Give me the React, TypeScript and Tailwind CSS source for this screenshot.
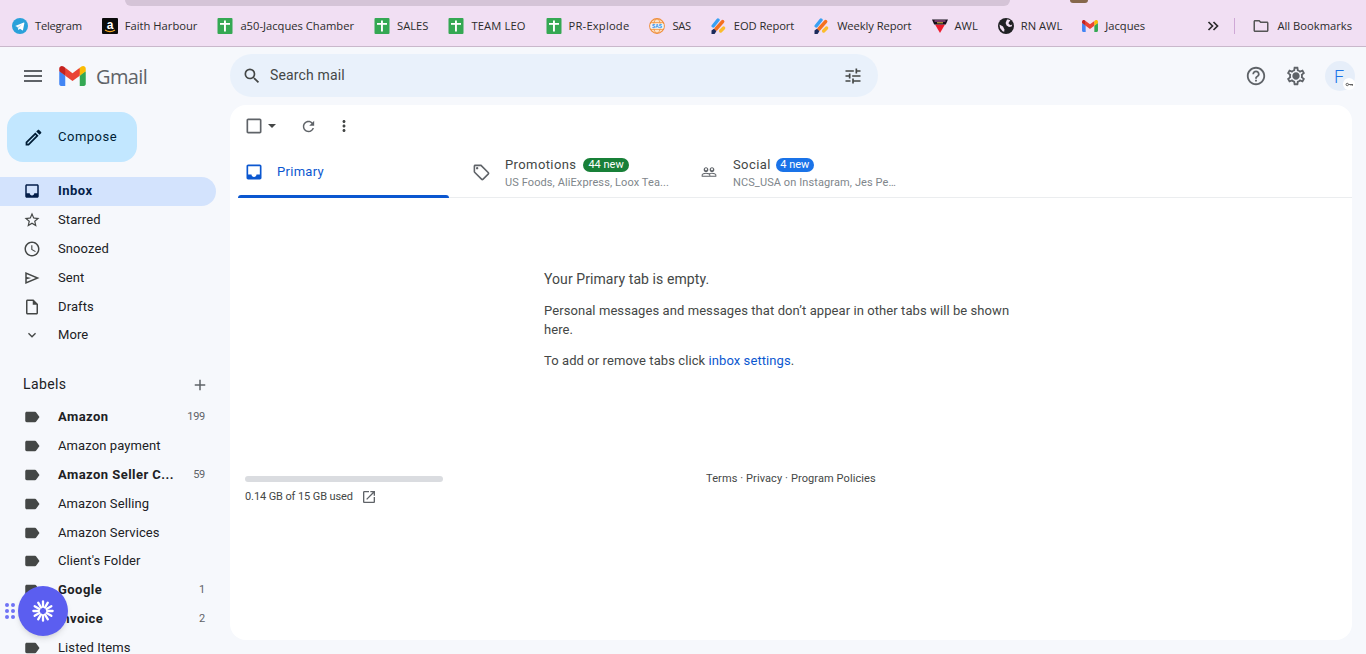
import React from "react";

const P = {
  menu: "M3 18h18v-2H3v2zm0-5h18v-2H3v2zm0-7v2h18V6H3z",
  search: "M15.5 14h-.79l-.28-.27A6.471 6.471 0 0 0 16 9.5 6.5 6.5 0 1 0 9.5 16c1.61 0 3.09-.59 4.23-1.57l.27.28v.79l5 4.99L20.49 19l-4.99-5zm-6 0C7.01 14 5 11.99 5 9.5S7.01 5 9.5 5 14 7.01 14 9.5 11.99 14 9.5 14z",
  tune: "M3 17v2h6v-2H3zM3 5v2h10V5H3zm10 16v-2h8v-2h-8v-2h-2v6h2zM7 9v2H3v2h4v2h2V9H7zm14 4v-2H11v2h10zm-6-4h2V7h4V5h-4V3h-2v6z",
  help: "M11 18h2v-2h-2v2zm1-16C6.48 2 2 6.48 2 12s4.48 10 10 10 10-4.48 10-10S17.52 2 12 2zm0 18c-4.41 0-8-3.59-8-8s3.59-8 8-8 8 3.59 8 8-3.59 8-8 8zm0-14c-2.21 0-4 1.79-4 4h2c0-1.1.9-2 2-2s2 .9 2 2c0 2-3 1.75-3 5h2c0-2.25 3-2.5 3-5 0-2.21-1.79-4-4-4z",
  gear: "M19.43 12.98c.04-.32.07-.64.07-.98 0-.34-.03-.66-.07-.98l2.11-1.65c.19-.15.24-.42.12-.64l-2-3.46c-.09-.16-.26-.25-.44-.25-.06 0-.12.01-.17.03l-2.49 1c-.52-.4-1.08-.73-1.69-.98l-.38-2.65C14.46 2.18 14.25 2 14 2h-4c-.25 0-.46.18-.49.42l-.38 2.65c-.61.25-1.17.59-1.69.98l-2.49-1c-.06-.02-.12-.03-.18-.03-.17 0-.34.09-.43.25l-2 3.46c-.13.22-.07.49.12.64l2.11 1.65c-.04.32-.07.65-.07.98 0 .33.03.66.07.98l-2.11 1.65c-.19.15-.24.42-.12.64l2 3.46c.09.16.26.25.44.25.06 0 .12-.01.17-.03l2.49-1c.52.4 1.08.73 1.69.98l.38 2.65c.03.24.24.42.49.42h4c.25 0 .46-.18.49-.42l.38-2.65c.61-.25 1.17-.59 1.69-.98l2.49 1c.06.02.12.03.18.03.17 0 .34-.09.43-.25l2-3.46c.12-.22.07-.49-.12-.64l-2.11-1.65zM17.45 11.27c.04.31.05.52.05.73 0 .21-.02.43-.05.73l-.14 1.13.89.7 1.08.84-.7 1.21-1.27-.51-1.04-.42-.9.68c-.43.32-.84.56-1.25.73l-1.06.43-.16 1.13-.2 1.35h-1.4l-.19-1.35-.16-1.13-1.06-.43c-.43-.18-.83-.41-1.23-.71l-.91-.7-1.06.43-1.27.51-.7-1.21 1.08-.84.89-.7-.14-1.13c-.03-.31-.05-.54-.05-.74s.02-.43.05-.73l.14-1.13-.89-.7-1.08-.84.7-1.21 1.27.51 1.04.42.9-.68c.43-.32.84-.56 1.25-.73l1.06-.43.16-1.13.2-1.35h1.39l.19 1.35.16 1.13 1.06.43c.43.18.83.41 1.23.71l.91.7 1.06-.43 1.27-.51.7 1.21-1.07.85-.89.7.14 1.13zM12 8c-2.21 0-4 1.79-4 4s1.79 4 4 4 4-1.79 4-4-1.79-4-4-4z",
  edit: "M3 17.25V21h3.75L17.81 9.94l-3.75-3.75L3 17.25zM5.92 19H5v-.92l9.06-9.06.92.92L5.92 19zM20.71 7.04c.39-.39.39-1.02 0-1.41l-2.34-2.34c-.2-.2-.45-.29-.71-.29s-.51.1-.7.29l-1.83 1.83 3.75 3.75 1.83-1.83z",
  inbox: "M19 3H4.99c-1.11 0-1.98.89-1.98 2L3 19c0 1.1.88 2 1.99 2H19c1.1 0 2-.9 2-2V5c0-1.11-.9-2-2-2zm0 12h-4c0 1.66-1.35 3-3 3s-3-1.34-3-3H4.99V5H19v10z",
  star: "M22 9.24l-7.19-.62L12 2 9.19 8.63 2 9.24l5.46 4.73L5.82 21 12 17.27 18.18 21l-1.63-7.03L22 9.24zM12 15.4l-3.76 2.27 1-4.28-3.32-2.88 4.38-.38L12 6.1l1.71 4.04 4.38.38-3.32 2.88 1 4.28L12 15.4z",
  clock: "M11.99 2C6.47 2 2 6.48 2 12s4.47 10 9.99 10C17.52 22 22 17.52 22 12S17.52 2 11.99 2zM12 20c-4.42 0-8-3.58-8-8s3.58-8 8-8 8 3.58 8 8-3.58 8-8 8zm.5-13H11v6l5.25 3.15.75-1.23-4.5-2.67z",
  send: "M3 20V4l19 8zm2-3 11.85-5L5 7v3.5l6 1.5-6 1.5z",
  draft: "M14 2H6c-1.1 0-1.99.9-1.99 2L4 20c0 1.1.89 2 1.99 2H18c1.1 0 2-.9 2-2V8l-6-6zM6 20V4h7v5h5v11H6z",
  more: "M16.59 8.59L12 13.17 7.41 8.59 6 10l6 6 6-6z",
  label: "M17.63 5.84C17.27 5.33 16.67 5 16 5L5 5.01C3.9 5.01 3 5.9 3 7v10c0 1.1.9 1.99 2 1.99L16 19c.67 0 1.27-.33 1.63-.84L22 12l-4.37-6.16z",
  refresh: "M17.65 6.35C16.2 4.9 14.21 4 12 4c-4.42 0-7.99 3.58-7.99 8s3.57 8 7.99 8c3.73 0 6.84-2.55 7.73-6h-2.08c-.82 2.33-3.04 4-5.65 4-3.31 0-6-2.69-6-6s2.69-6 6-6c1.66 0 3.14.69 4.22 1.78L13 11h7V4l-2.35 2.35z",
  vert: "M12 8c1.1 0 2-.9 2-2s-.9-2-2-2-2 .9-2 2 .9 2 2 2zm0 2c-1.1 0-2 .9-2 2s.9 2 2 2 2-.9 2-2-.9-2-2-2zm0 6c-1.1 0-2 .9-2 2s.9 2 2 2 2-.9 2-2-.9-2-2-2z",
  tag: "M21.41 11.58l-9-9C12.05 2.22 11.55 2 11 2H4c-1.1 0-2 .9-2 2v7c0 .55.22 1.05.59 1.42l9 9c.36.36.86.58 1.41.58.55 0 1.05-.22 1.41-.59l7-7c.37-.36.59-.86.59-1.41 0-.55-.23-1.06-.59-1.42zM13 20.01L4 11V4h7v-.01l9 9-7 7.02zM6.5 5A1.5 1.5 0 1 0 6.5 8 1.5 1.5 0 1 0 6.5 5z",
  people: "M16.5 13c-1.2 0-3.07.34-4.5 1-1.43-.67-3.3-1-4.5-1C5.33 13 1 14.08 1 16.25V19h22v-2.75c0-2.17-4.33-3.25-6.5-3.25zm-4 4.5h-10v-1.25c0-.54 2.56-1.75 5-1.75s5 1.21 5 1.75v1.25zm9 0H14v-1.25c0-.46-.2-.86-.52-1.22.88-.3 1.96-.53 3.02-.53 2.44 0 5 1.21 5 1.75v1.25zM7.5 12c1.93 0 3.5-1.57 3.5-3.5S9.43 5 7.5 5 4 6.57 4 8.5 5.57 12 7.5 12zm0-5.5c.83 0 1.5.67 1.5 1.5s-.67 1.5-1.5 1.5S6 8.83 6 8s.67-1.5 1.5-1.5zm9 5.5c1.93 0 3.5-1.57 3.5-3.5S18.43 5 16.5 5 13 6.57 13 8.5s1.57 3.5 3.5 3.5zm0-5.5c.83 0 1.5.67 1.5 1.5s-.67 1.5-1.5 1.5S15 8.83 15 8s.67-1.5 1.5-1.5z",
  open: "M19 19H5V5h7V3H5c-1.11 0-2 .9-2 2v14c0 1.1.89 2 2 2h14c1.1 0 2-.9 2-2v-7h-2v7zM14 3v2h3.59l-9.83 9.83 1.41 1.41L19 6.41V10h2V3h-7z",
  add: "M19 13h-6v6h-2v-6H5v-2h6V5h2v6h6v2z",
  box: "M19 5v14H5V5h14m0-2H5c-1.1 0-2 .9-2 2v14c0 1.1.9 2 2 2h14c1.1 0 2-.9 2-2V5c0-1.1-.9-2-2-2z",
  folder: "M20 6h-8l-2-2H4c-1.1 0-1.99.9-1.99 2L2 18c0 1.1.9 2 2 2h16c1.1 0 2-.9 2-2V8c0-1.1-.9-2-2-2zm0 12H4V6h5.17l2 2H20v10z",
};

function I({ d, className, fill = "#444746" }: { d: string; className: string; fill?: string }) {
  return (
    <svg viewBox="0 0 24 24" className={"shrink-0 " + className} fill={fill}>
      <path d={d} />
    </svg>
  );
}

function GmailM({ className }: { className: string }) {
  return (
    <svg viewBox="0 0 256 193" className={"shrink-0 " + className}>
      <path fill="#4285F4" d="M58.182 192.05V93.14L27.507 65.077 0 49.504v125.091c0 9.658 7.825 17.455 17.455 17.455h40.727Z" />
      <path fill="#34A853" d="M197.818 192.05h40.727c9.659 0 17.455-7.826 17.455-17.455V49.505l-31.156 17.837-27.026 25.798v98.91Z" />
      <path fill="#EA4335" d="m58.182 93.14-4.174-38.647 4.174-36.989L128 69.868l69.818-52.364 4.669 34.992-4.669 40.644L128 145.504z" />
      <path fill="#FBBC04" d="M197.818 17.504V93.14L256 49.504V26.231c0-21.585-24.64-33.89-41.89-20.945l-16.292 12.218Z" />
      <path fill="#C5221F" d="m0 49.504 26.759 20.07L58.182 93.14V17.504L41.89 5.286C24.61-7.66 0 4.646 0 26.23v23.273Z" />
    </svg>
  );
}

const S = "w-[16px] h-[16px] shrink-0";

function Telegram() {
  return (
    <svg viewBox="0 0 16 16" className={S}>
      <circle cx="8" cy="8" r="8" fill="#2aa1da" />
      <path d="M3.2 7.9l8.6-3.4c.4-.1.7.1.6.6l-1.4 6.8c-.1.5-.4.6-.8.4L8 10.7 6.8 11.8c-.2.2-.4.2-.5-.1L5.5 9.1z" fill="#fff" />
      <path d="M5.9 9l4.3-2.8-3.2 3.3-.3 1.4z" fill="#b5dcef" />
    </svg>
  );
}
function Amazon() {
  return (
    <svg viewBox="0 0 16 16" className={S}>
      <rect width="16" height="16" rx="1" fill="#0b0b0b" />
      <text x="8" y="10.5" textAnchor="middle" fontSize="12" fontWeight="700" fill="#fff" fontFamily="Liberation Sans, sans-serif">a</text>
      <path d="M3 12c3 2 7 2 10 0" stroke="#f5a623" strokeWidth="1.2" fill="none" />
    </svg>
  );
}
function Sheet() {
  return (
    <svg viewBox="0 0 16 16" className={S}>
      <rect x="0.5" width="15" height="16" rx="1" fill="#34a853" />
      <rect x="3" y="5" width="10" height="1.8" fill="#fff" />
      <rect x="7" y="2.5" width="1.9" height="11" fill="#fff" />
    </svg>
  );
}
function Sas() {
  return (
    <svg viewBox="0 0 16 16" className={S}>
      <circle cx="8" cy="8" r="7.3" fill="#fde3c8" stroke="#ef8f3c" strokeWidth="1.2" />
      <ellipse cx="8" cy="8" rx="3.4" ry="7.2" fill="none" stroke="#ef8f3c" strokeWidth=".8" />
      <path d="M1 4.6h14M1 11.4h14" stroke="#ef8f3c" strokeWidth=".8" />
      <rect x="1.4" y="5.8" width="13.2" height="4.6" rx=".6" fill="#eaf4fd" />
      <text x="8" y="9.9" textAnchor="middle" fontSize="4.8" fontWeight="700" fill="#1e88e5" fontFamily="Liberation Sans, sans-serif">SAS</text>
    </svg>
  );
}
function Jira() {
  return (
    <svg viewBox="0 0 16 16" className={S}>
      <path d="M2.2 8L7 2" stroke="#3aa0f2" strokeWidth="3.4" strokeLinecap="round" />
      <path d="M5 11L11.6 3.6" stroke="#f4701f" strokeWidth="3.6" strokeLinecap="round" />
      <path d="M9.6 13L12.6 10" stroke="#fbbd2c" strokeWidth="3.4" strokeLinecap="round" />
      <path d="M0.5 16V12.4L3 10.8 5.4 13.2 3.6 16z" fill="#1b2a5b" />
    </svg>
  );
}
function Awl() {
  return (
    <svg viewBox="0 0 16 16" className={S}>
      <path d="M3 6.5h10L8 15z" fill="#ee1c2e" />
      <path d="M0 1.5h16l-2.2 5H2.2z" fill="#15101a" />
      <path d="M2.5 3h11" stroke="#d869b8" strokeWidth="1" />
      <path d="M5 4.8h6" stroke="#e3c64a" strokeWidth="1" />
    </svg>
  );
}
function Globe() {
  return (
    <svg viewBox="0 0 16 16" className={S}>
      <circle cx="8" cy="8" r="8" fill="#202124" />
      <path d="M1.5 6.4L5 8.4l1.4 3-.2 2.4-1.6-.6L2 10z" fill="#f1dff3" />
      <path d="M9 1.6c1.6 0 2.6.4 3.4 1l-1.6 1.6-.2 1.6 2 1.4 1.6-.6-.6 2-2.6.4-2.4-1.4L7.6 5z" fill="#f1dff3" />
    </svg>
  );
}
function Bm({ icon, text, t = "" }: { icon: React.ReactNode; text: string; t?: string }) {
  return (
    <div className="flex items-center gap-[7px] shrink-0">
      {icon}
      <span className={"whitespace-nowrap text-[11.2px] text-[#2b2b2b] " + t}>{text}</span>
    </div>
  );
}

function Row({
  d,
  text,
  active,
  bold,
  count,
  small,
  short,
  lift,
}: {
  d: string;
  text: string;
  active?: boolean;
  bold?: boolean;
  count?: string;
  small?: boolean;
  short?: boolean;
  lift?: boolean;
}) {
  return (
    <div
      className={
        "flex items-center w-[216px] rounded-r-full pl-[23px] pr-[11px] " +
        (short ? "h-[28px] " : "h-[29px] ") +
        (lift ? (short ? "pb-[1px] " : "pb-[2px] ") : short ? "pt-[1px] " : "") +
        (active ? "bg-[#d3e3fd] text-[#041e49]" : "text-[#202124]")
      }
    >
      <div className="w-[18px] flex justify-center">
        <I d={d} fill={active ? "#041e49" : "#444746"} className={small ? "w-[16px] h-[16px]" : "w-[18px] h-[18px]"} />
      </div>
      <span
        className={
          "ml-[17px] flex-1 text-[13px] whitespace-nowrap " +
          (bold || active ? "font-bold tracking-[0.45px]" : "tracking-[0.1px]")
        }
      >
        {text}
      </span>
      {count && <span className="mt-[1px] text-[11px] tracking-[-0.3px] text-[#5f6368]">{count}</span>}
    </div>
  );
}

export default function App() {
  return (
    <div className="relative w-[1366px] h-[654px] overflow-hidden flex flex-col bg-[#f6f8fc] font-['Roboto',sans-serif]">
      <div className="h-[47px] shrink-0 bg-[#f1dff3] border-b border-[#c9b8cb] font-['Open_Sans',sans-serif]">
        <div className="h-[6px] flex">
          <div className="ml-[125px] w-[885px] h-[6px] bg-[#d5c4d7] rounded-b-[10px]" />
          <div className="ml-[60px] w-[18px] h-[3px] bg-[#86684b] rounded-b-[3px]" />
        </div>
        <div className="h-[40px] flex items-center pl-[12px] gap-[20px]">
          <Bm icon={<Telegram />} text="Telegram" t="tracking-[-0.25px]" />
          <Bm icon={<Amazon />} text="Faith Harbour" />
          <Bm icon={<Sheet />} text="a50-Jacques Chamber" />
          <Bm icon={<Sheet />} text="SALES" />
          <Bm icon={<Sheet />} text="TEAM LEO" t="tracking-[0.12px]" />
          <Bm icon={<Sheet />} text="PR-Explode" t="tracking-[0.2px]" />
          <Bm icon={<Sas />} text="SAS" t="tracking-[-0.3px]" />
          <Bm icon={<Jira />} text="EOD Report" t="tracking-[-0.1px]" />
          <Bm icon={<Jira />} text="Weekly Report" t="tracking-[-0.08px]" />
          <Bm icon={<Awl />} text="AWL" />
          <Bm icon={<Globe />} text="RN AWL" />
          <Bm icon={<GmailM className="w-[16px] h-[12px]" />} text="Jacques" />
          <div className="flex-1 flex items-center justify-end pr-[14px] gap-[15px]">
            <svg viewBox="0 0 12 12" className="w-[12px] h-[12px]" fill="none" stroke="#2b2b2b" strokeWidth="1.7">
              <path d="M1.5 2l4 4-4 4M6.5 2l4 4-4 4" />
            </svg>
            <div className="w-px h-[16px] bg-[#cfa8d6] mr-[2px]" />
            <div className="flex items-center gap-[7px]">
              <I d={P.folder} fill="#555" className="w-[18px] h-[18px]" />
              <span className="text-[11.2px] text-[#2b2b2b] whitespace-nowrap">All Bookmarks</span>
            </div>
          </div>
        </div>
      </div>

      <div className="h-[58px] shrink-0 flex items-start">
        <div className="w-[230px] h-[58px] flex items-center shrink-0">
          <I d={P.menu} fill="#5f6368" className="w-[24px] h-[24px] ml-[21px]" />
          <GmailM className="w-[27px] h-[20px] ml-[14px]" />
          <span className="ml-[10px] mt-[1px] text-[20px] text-[#5f6368] font-['Open_Sans',sans-serif] tracking-[-0.6px]">Gmail</span>
        </div>
        <div className="mt-[7px] w-[648px] h-[43px] rounded-full bg-[#e9f1fb] flex items-center pl-[12px] pr-[15px]">
          <I d={P.search} className="w-[20px] h-[20px]" />
          <span className="ml-[8px] flex-1 text-[14px] tracking-[0.15px] text-[#444746]">Search mail</span>
          <I d={P.tune} className="w-[20px] h-[20px]" />
        </div>
        <div className="flex-1 flex items-center justify-end h-[58px] pr-[11px]">
          <I d={P.help} fill="#5f6368" className="w-[22px] h-[22px]" />
          <I d={P.gear} fill="#5f6368" className="ml-[18px] w-[22px] h-[22px]" />
          <div className="relative ml-[18px] w-[30px] h-[30px] rounded-full bg-[#e6eef9] flex items-center justify-center text-[#1a73e8] text-[18px] font-light pr-[2px]">
            F
            <div className="absolute right-0 bottom-[1px] w-[12px] h-[12px] rounded-full bg-white flex items-center justify-center">
              <svg viewBox="0 0 12 12" className="w-[9px] h-[9px]" fill="none" stroke="#555" strokeWidth="1.2">
                <circle cx="3" cy="6" r="1.6" />
                <path d="M4.6 6h6M8 6v1.6M10 6v1.6" />
              </svg>
            </div>
          </div>
        </div>
      </div>

      <div className="flex flex-1 min-h-0">
        <aside className="w-[230px] shrink-0 overflow-hidden">
          <div className="mt-[7px] ml-[7px] w-[130px] h-[50px] rounded-[16px] bg-[#c2e7ff] flex items-center pl-[16px] text-[#001d35]">
            <I d={P.edit} fill="#001d35" className="w-[21px] h-[21px]" />
            <span className="ml-[14px] text-[13px] tracking-[0.5px]">Compose</span>
          </div>
          <div className="mt-[15px]">
            <Row d={P.inbox} text="Inbox" active lift />
            <Row d={P.star} text="Starred" lift />
            <Row d={P.clock} text="Snoozed" lift />
            <Row d={P.send} text="Sent" lift />
            <Row d={P.draft} text="Drafts" short lift />
            <Row d={P.more} text="More" small lift />
          </div>
          <div className="mt-[20px] h-[29px] w-[216px] flex items-center justify-between pl-[23px] pr-[7px]">
            <span className="text-[14px] tracking-[0.4px] text-[#202124]">Labels</span>
            <I d={P.add} fill="#5f6368" className="w-[18px] h-[18px]" />
          </div>
          <div className="mt-[3px]">
            <Row d={P.label} text="Amazon" bold count="199" />
            <Row d={P.label} text="Amazon payment" />
            <Row d={P.label} text="Amazon Seller C..." bold count="59" />
            <Row d={P.label} text="Amazon Selling" />
            <Row d={P.label} text="Amazon Services" short />
            <Row d={P.label} text="Client's Folder" />
            <Row d={P.label} text="Google" bold count="1" />
            <Row d={P.label} text="Invoice" bold count="2" />
            <Row d={P.label} text="Listed Items" />
          </div>
        </aside>

        <main className="w-[1122px] h-[535px] bg-white rounded-[16px] shrink-0 pl-[8px] flex flex-col">
          <div className="h-[42px] flex items-center pl-[6px] shrink-0">
            <I d={P.box} fill="#5f6368" className="w-[20px] h-[20px]" />
            <svg viewBox="0 0 10 5" className="ml-[4px] w-[8px] h-[4px]" fill="#444746">
              <path d="M0 0h10L5 5z" />
            </svg>
            <I d={P.refresh} fill="#5f6368" className="ml-[24px] w-[17px] h-[17px]" />
            <I d={P.vert} fill="#444746" className="ml-[18px] w-[18px] h-[18px]" />
          </div>
          <div className="h-[51px] shrink-0 flex border-b border-[#ebedef]">
            <div className="relative w-[211px] h-[51px] flex items-center pl-[6px] pb-[2px] text-[#0b57d0]">
              <I d={P.inbox} fill="#0b57d0" className="w-[20px] h-[20px]" />
              <span className="ml-[13px] text-[13px] tracking-[0.3px]">Primary</span>
              <div className="absolute left-0 right-0 bottom-0 h-[3px] bg-[#0b57d0] rounded-t-[3px]" />
            </div>
            <div className="w-[228px] flex items-center pl-[23px]">
              <I d={P.tag} fill="#5f6368" className="w-[19px] h-[19px]" />
              <div className="ml-[14px] pt-[2px]">
                <div className="flex items-center gap-[7px] h-[17px]">
                  <span className="text-[13px] tracking-[0.4px] text-[#444746]">Promotions</span>
                  <span className="h-[14px] px-[5px] rounded-full bg-[#188038] text-white text-[11px] leading-[14px]">44 new</span>
                </div>
                <div className="mt-[1px] text-[11px] tracking-[0.1px] text-[#80868b] h-[15px] leading-[15px] w-[164px] truncate">US Foods, AliExpress, Loox Tea...</div>
              </div>
            </div>
            <div className="flex items-center pl-[24px]">
              <I d={P.people} fill="#5f6368" className="w-[16px] h-[16px]" />
              <div className="ml-[16px] pt-[2px]">
                <div className="flex items-center gap-[5px] h-[17px]">
                  <span className="text-[13px] tracking-[0.4px] text-[#444746]">Social</span>
                  <span className="h-[14px] px-[4.5px] rounded-full bg-[#1a73e8] text-white text-[11px] leading-[14px]">4 new</span>
                </div>
                <div className="mt-[1px] text-[11px] tracking-[0.1px] text-[#80868b] h-[15px] leading-[15px] w-[164px] truncate">NCS_USA on Instagram, Jes Pe...</div>
              </div>
            </div>
          </div>

          <div className="ml-[306px] mt-[71px] w-[480px] text-[#444746] tracking-[0.08px]">
            <div className="text-[14px] leading-[20px]">Your Primary tab is empty.</div>
            <div className="mt-[12px] text-[13px] leading-[19px]">
              Personal messages and messages that don’t appear in other tabs will be shown here.
            </div>
            <div className="mt-[12px] text-[13px] leading-[19px]">
              To add or remove tabs click <span className="text-[#0b57d0]">inbox settings</span>.
            </div>
          </div>

          <div className="mt-[106px] flex">
            <div className="ml-[7px] w-[198px]">
              <div className="h-[6px] rounded-full bg-[#dadce0]" />
              <div className="mt-[7px] flex items-center gap-[8px] text-[11px] tracking-[-0.1px] text-[#444746] whitespace-nowrap">
                0.14 GB of 15 GB used
                <I d={P.open} fill="#5f6368" className="w-[16px] h-[16px]" />
              </div>
            </div>
            <div className="ml-[263px] -mt-[5px] text-[11px] tracking-[0.1px] text-[#444746] whitespace-nowrap">
              Terms · Privacy · Program Policies
            </div>
          </div>
        </main>
      </div>

      <div className="absolute left-[5px] top-[603px] grid grid-cols-2 gap-[2px]">
        {[0, 1, 2, 3, 4, 5].map((i) => (
          <div key={i} className="w-[4px] h-[4px] rounded-full bg-[#6f73f5]" />
        ))}
      </div>
      <div className="absolute left-[18px] top-[586px] w-[50px] h-[50px] rounded-full bg-[#5b5ef0] shadow-md flex items-center justify-center">
        <svg viewBox="0 0 24 24" className="w-[22px] h-[22px]" stroke="#fff" strokeWidth="2.5" strokeLinecap="round">
          {[0, 30, 60, 90, 120, 150, 180, 210, 240, 270, 300, 330].map((a) => (
            <line key={a} x1="12" y1="7.5" x2="12" y2="1.5" transform={`rotate(${a} 12 12)`} />
          ))}
        </svg>
      </div>
    </div>
  );
}
